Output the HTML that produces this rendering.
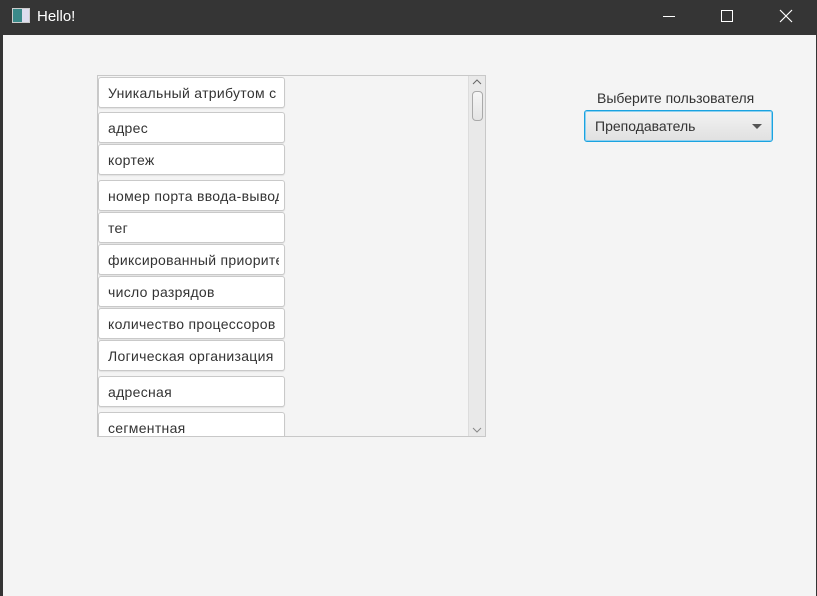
<!DOCTYPE html>
<html><head><meta charset="utf-8"><style>
*{box-sizing:border-box;margin:0;padding:0}
body{width:817px;height:596px;background:#343434;position:relative;overflow:hidden;font-family:"Liberation Sans","DejaVu Sans",sans-serif;}
.title{position:absolute;left:0;top:0;width:817px;height:35px;background:#353535;color:#fff;font-size:15px}
.content{position:absolute;left:3px;top:35px;width:813px;height:561px;background:#f4f4f4}
.list{position:absolute;left:97px;top:75px;width:389px;height:362px;border:1px solid #c8c8c8;background:#f4f4f4;overflow:hidden}
.item{position:absolute;left:0;width:187px;height:31px;background:#fff;border:1px solid #c9c9c9;border-radius:3px;font-size:14px;letter-spacing:0.3px;color:#333;padding:7px 5px 0 9px;white-space:nowrap;box-shadow:0 1px 1px rgba(0,0,0,.08)}
.item span{display:block;overflow:hidden;width:100%}
.sb{position:absolute;left:468px;top:76px;width:17px;height:360px;background:#e9e9e9;border-left:1px solid #dcdcdc}
.thumb{position:absolute;left:472px;top:91px;width:11px;height:30px;border:1px solid #a9a9a9;border-radius:4px;background:linear-gradient(#f6f6f6,#e4e4e4)}
.lbl{position:absolute;left:597px;top:90px;font-size:14px;color:#333}
.combo{position:absolute;left:584px;top:110px;width:189px;height:32px;border:1px solid #1aa3e0;border-radius:3px;background:linear-gradient(#f3f3f3,#e0e0e0);box-shadow:0 0 0 1px #8fd0ef inset;font-size:14px;color:#333;padding:7px 0 0 10px}
</style></head><body>
<div class="title">
<div style="position:absolute;left:12px;top:8px;width:18px;height:15px;border:1px solid #ccc;background:linear-gradient(90deg,#3a8a8a 0 55%,#dde 55%)"></div>
<div style="position:absolute;left:37px;top:8px">Hello!</div>
<div style="position:absolute;left:663px;top:16px;width:12px;height:1px;background:#fff"></div>
<div style="position:absolute;left:721px;top:10px;width:12px;height:12px;border:1px solid #fff"></div>
<svg style="position:absolute;left:779px;top:9px" width="14" height="14"><path d="M1 1L13 13M13 1L1 13" stroke="#fff" stroke-width="1.2"/></svg>
</div>
<div class="content"></div>
<div class="list">
<div class="item" style="top:1px"><span>Уникальный атрибутом с</span></div>
<div class="item" style="top:36px"><span>адрес</span></div>
<div class="item" style="top:68px"><span>кортеж</span></div>
<div class="item" style="top:104px"><span>номер порта ввода-вывода</span></div>
<div class="item" style="top:136px"><span>тег</span></div>
<div class="item" style="top:168px"><span>фиксированный приоритет</span></div>
<div class="item" style="top:200px"><span>число разрядов</span></div>
<div class="item" style="top:232px"><span>количество процессоров</span></div>
<div class="item" style="top:264px"><span>Логическая организация</span></div>
<div class="item" style="top:300px"><span>адресная</span></div>
<div class="item" style="top:336px"><span>сегментная</span></div>
</div>
<div class="sb"></div>
<svg style="position:absolute;left:471px;top:78px" width="12" height="8"><path d="M2 6L6 2L10 6" stroke="#666" fill="none"/></svg>
<div class="thumb"></div>
<svg style="position:absolute;left:471px;top:426px" width="12" height="8"><path d="M2 2L6 6L10 2" stroke="#888" fill="none"/></svg>
<div class="lbl">Выберите пользователя</div>
<div class="combo">Преподаватель
<div style="position:absolute;right:10px;top:13px;width:0;height:0;border-left:5px solid transparent;border-right:5px solid transparent;border-top:5px solid #555"></div></div>
</body></html>
